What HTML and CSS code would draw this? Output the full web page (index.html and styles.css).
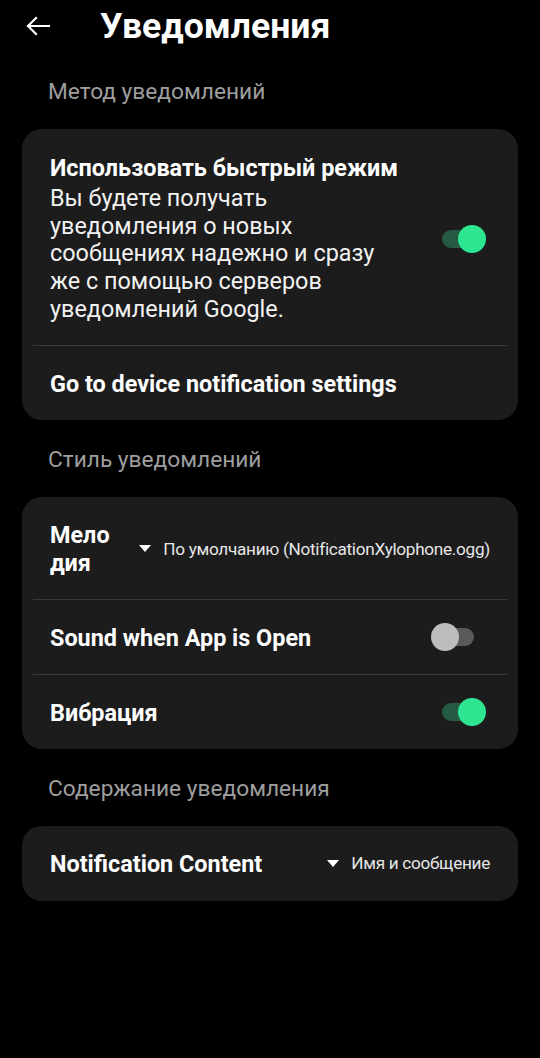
FILE: index.html
```html
<!DOCTYPE html>
<html lang="ru">
<head>
<meta charset="utf-8">
<link rel="stylesheet" href="styles.css">
</head>
<body>
<header class="topbar">
  <svg class="back" width="24" height="20" viewBox="0 0 24 20"><path d="M2 10H23M10 2L2 10L10 18" fill="none" stroke="#fff" stroke-width="2.2" stroke-linecap="square"/></svg>
  <h1 class="title">Уведомления</h1>
</header>

<div class="section-label">Метод уведомлений</div>
<section class="card">
  <div class="row row-fast">
    <div class="text">
      <div class="row-title">Использовать быстрый режим</div>
      <div class="row-desc">Вы будете получать уведомления о новых сообщениях надежно и сразу же с помощью серверов уведомлений Google.</div>
    </div>
    <div class="switch on"><span class="track"></span><span class="thumb"></span></div>
  </div>
  <div class="divider"></div>
  <div class="row row-single">
    <div class="row-title">Go to device notification settings</div>
  </div>
</section>

<div class="section-label">Стиль уведомлений</div>
<section class="card">
  <div class="row row-melody">
    <div class="row-title narrow">Мелодия</div>
    <div class="dropdown"><span class="caret"></span><span>По умолчанию (NotificationXylophone.ogg)</span></div>
  </div>
  <div class="divider"></div>
  <div class="row row-single">
    <div class="row-title">Sound when App is Open</div>
    <div class="switch off"><span class="track"></span><span class="thumb"></span></div>
  </div>
  <div class="divider"></div>
  <div class="row row-single">
    <div class="row-title">Вибрация</div>
    <div class="switch on"><span class="track"></span><span class="thumb"></span></div>
  </div>
</section>

<div class="section-label">Содержание уведомления</div>
<section class="card">
  <div class="row row-single row-only">
    <div class="row-title">Notification Content</div>
    <div class="dropdown"><span class="caret"></span><span>Имя и сообщение</span></div>
  </div>
</section>
</body>
</html>
```
FILE: styles.css
```css
html, body {
  margin: 0;
  padding: 0;
  background: #000;
  color: #fff;
  font-family: Roboto, "Noto Sans", sans-serif;
}
.topbar {
  height: 54px;
  display: flex;
  align-items: center;
}
.back {
  margin-left: 26px;
  margin-top: -2px;
  flex: none;
}
.title {
  margin: -2px 0 0 50px;
  font-size: 35.6px;
  font-weight: 700;
  line-height: 40px;
}
.section-label {
  color: #9e9e9e;
  font-size: 22.7px;
  line-height: 24px;
  padding: 26px 0 25px 48px;
}
.card + .section-label {
  padding-top: 28px;
}
.card {
  margin: 0 22px;
  background: #1c1c1c;
  border-radius: 20px;
  display: flex;
  flex-direction: column;
}
.divider {
  height: 1px;
  background: #3a3a3a;
  margin: 0 11px;
}
.row {
  display: flex;
  align-items: center;
  padding: 0 28px 0 28px;
}
.row-single {
  height: 74px;
}
.row-only {
  height: 75px;
}
.row-single .row-title {
  margin-top: 2px;
}
.row-fast {
  padding-top: 25px;
  padding-bottom: 21px;
}
.row-fast .text {
  flex: 1;
}
.row-title {
  font-size: 23.4px;
  font-weight: 700;
  line-height: 28px;
}
.row-desc {
  margin-top: 3px;
  font-size: 23.4px;
  line-height: 27.7px;
  color: #f2f2f2;
  max-width: 336px;
}
.row-melody {
  padding-top: 24px;
  padding-bottom: 22px;
}
.narrow {
  width: 64px;
  word-break: break-all;
  flex: none;
}
.dropdown {
  margin-left: auto;
  display: flex;
  align-items: center;
  gap: 12px;
  font-size: 17.2px;
  letter-spacing: -0.3px;
  color: #e6e6e6;
  white-space: nowrap;
}
.caret {
  width: 0;
  height: 0;
  border-left: 6px solid transparent;
  border-right: 6px solid transparent;
  border-top: 7px solid #fff;
}
.switch {
  margin-left: auto;
  margin-right: 4px;
  position: relative;
  width: 55px;
  height: 28px;
  flex: none;
}
.switch .track {
  position: absolute;
  left: 11px;
  right: 12px;
  top: 5px;
  height: 18px;
  border-radius: 9px;
}
.switch .thumb {
  position: absolute;
  top: 0;
  width: 28px;
  height: 28px;
  border-radius: 50%;
}
.switch.on .track { background: #275a42; }
.switch.on .thumb { right: 0; background: #2ee592; }
.switch.off .track { background: #5a5a5a; }
.switch.off .thumb { left: 0; background: #bdbdbd; }
```
